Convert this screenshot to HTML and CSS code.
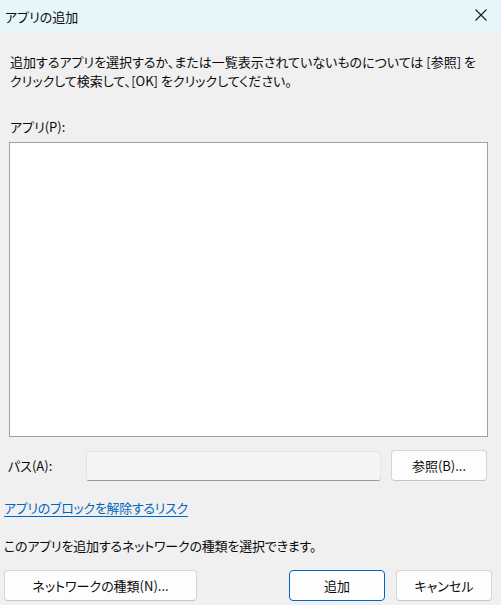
FILE: index.html
```html
<!DOCTYPE html>
<html lang="ja">
<head>
    <meta charset="UTF-8">
    <title>アプリの追加</title>
    <link rel="stylesheet" href="styles.css">
</head>
<body>
  <div class="dialog">
    <header class="titlebar">
      <span class="title">アプリの追加</span>
      <button class="close-btn" aria-label="閉じる">
        <svg width="12" height="12" viewBox="0 0 12 12"><path d="M0.5 0.5 L11.5 11.5 M11.5 0.5 L0.5 11.5" stroke="#1a1a1a" stroke-width="1.1" fill="none"/></svg>
      </button>
    </header>

    <div class="content">
      <p class="desc">追加するアプリを選択するか、または一覧表示されていないものについては [参照] を<br>クリックして検索して、[OK] をクリックしてください。</p>

      <label class="list-label">アプリ(P):</label>
      <div class="app-list"></div>

      <div class="path-row">
        <span class="path-label">パス(A):</span>
        <div class="path-input"></div>
        <button class="btn browse-btn">参照(B)...</button>
      </div>

      <a href="#" class="risk-link">アプリのブロックを解除するリスク</a>

      <p class="network-note">このアプリを追加するネットワークの種類を選択できます。</p>

      <div class="footer">
        <button class="btn network-btn">ネットワークの種類(N)...</button>
        <div class="footer-right">
          <button class="btn primary">追加</button>
          <button class="btn">キャンセル</button>
        </div>
      </div>
    </div>
  </div>
</body>
</html>
```

FILE: styles.css
```css
html, body {
    margin: 0;
    padding: 0;
    background-color: #f0f0f0;
    font-family: "Noto Sans CJK JP", "Noto Sans", sans-serif;
    font-size: 13px;
    color: #0a0a0a;
    font-feature-settings: "palt";
}

.dialog {
    width: 501px;
    height: 605px;
    display: flex;
    flex-direction: column;
    overflow: hidden;
}

/* Title bar */
.titlebar {
    height: 32px;
    background-color: #e6f6f9;
    display: flex;
    align-items: center;
    justify-content: space-between;
    padding: 0 14px 0 5px;
    box-sizing: border-box;
}

.title {
    font-size: 13px;
    line-height: 1;
}

.close-btn {
    border: none;
    background: none;
    padding: 0;
    width: 12px;
    height: 12px;
    margin-top: -2px;
    display: flex;
}

/* Body */
.content {
    display: flex;
    flex-direction: column;
    padding: 0 0 0 4px;
}

.desc {
    margin: 20px 0 0 6px;
    line-height: 19px;
}

.list-label {
    margin: 27px 0 0 6px;
    line-height: 19px;
}

.app-list {
    margin: 6px 0 0 5px;
    width: 477px;
    height: 293px;
    background-color: #ffffff;
    border: 1px solid #a0a0a0;
}

.path-row {
    display: flex;
    align-items: center;
    margin-top: 12px;
    height: 32px;
}

.path-label {
    width: 82px;
    padding-left: 4px;
    box-sizing: border-box;
}

.path-input {
    width: 295px;
    height: 30px;
    box-sizing: border-box;
    background-color: #f5f5f5;
    border: 1px solid #e5e5e5;
    border-bottom-color: #9a9a9a;
    border-radius: 3px;
    margin-top: 2px;
}

.btn {
    font-family: inherit;
    font-size: 13px;
    font-feature-settings: "palt";
    color: #0a0a0a;
    background-color: #fdfdfd;
    border: 1px solid #d5d5d5;
    border-bottom-color: #c4c4c4;
    border-radius: 4px;
    height: 31px;
    width: 96px;
    padding: 0;
    box-sizing: border-box;
}

.browse-btn {
    margin-left: 10px;
}

.risk-link {
    margin-top: 17px;
    color: #0067c0;
    line-height: 19px;
    align-self: flex-start;
    text-decoration: underline;
    text-underline-offset: 3px;
    letter-spacing: -0.3px;
}

.network-note {
    margin: 19px 0 0 0;
    line-height: 19px;
    letter-spacing: -0.2px;
}

.footer {
    display: flex;
    justify-content: space-between;
    margin-top: 15px;
    width: 488px;
}

.network-btn {
    width: 193px;
}

.footer-right {
    display: flex;
    gap: 11px;
}

.primary {
    border: 1px solid #0067c0;
}
```
